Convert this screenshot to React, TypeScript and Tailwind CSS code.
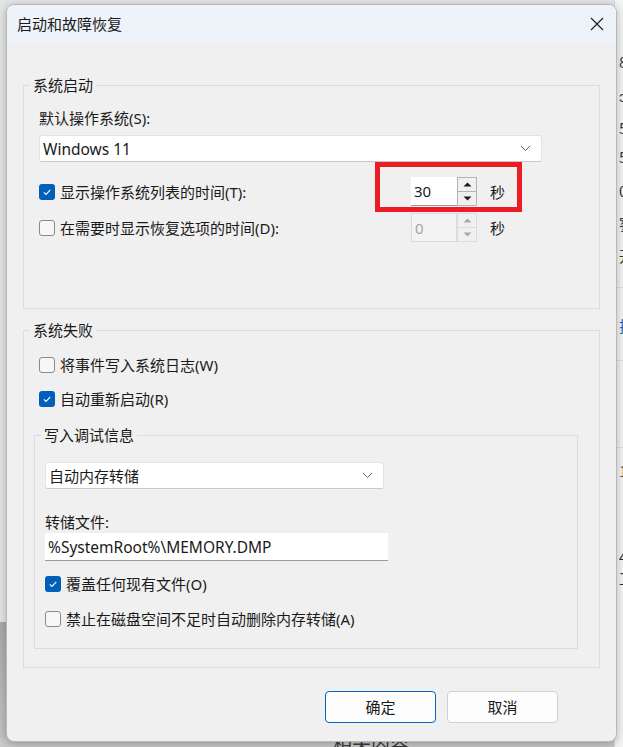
import { ReactNode } from 'react'

function Check({ checked }: { checked?: boolean }) {
  if (checked) {
    return (
      <span className="w-[16px] h-[16px] shrink-0 rounded-[3px] bg-[#005fb8] flex items-center justify-center">
        <svg width="10" height="10" viewBox="0 0 10 10">
          <path d="M1.8 5.3 L4 7.4 L8.3 2.9" stroke="#ffffff" strokeWidth="1.1" fill="none" />
        </svg>
      </span>
    )
  }
  return <span className="w-[16px] h-[16px] shrink-0 rounded-[3px] border border-[#8b8b8b] bg-[#f7f7f7]" />
}

function CheckRow({ checked, children, className = '' }: { checked?: boolean; children: ReactNode; className?: string }) {
  return (
    <div className={`flex items-center gap-[5px] h-[20px] ${className}`}>
      <Check checked={checked} />
      <span>{children}</span>
    </div>
  )
}

function Chevron() {
  return (
    <svg width="11" height="7" viewBox="0 0 11 7">
      <path d="M1 1 L5.5 5.5 L10 1" stroke="#5f5f5f" strokeWidth="1" fill="none" />
    </svg>
  )
}

function Spinner({ value, disabled }: { value: string; disabled?: boolean }) {
  const arrow = disabled ? '#a8a8a8' : '#1a1a1a'
  return (
    <div className="flex h-[29px]">
      <div
        className={`w-[46px] h-full flex items-center pl-[3px] border-b ${
          disabled ? 'bg-[#f3f3f3] border border-[#dcdcdc] text-[#a6a6a6]' : 'bg-white border-[#9a9a9a] text-[#1a1a1a]'
        }`}
      >
        {value}
      </div>
      <div className={`w-[20px] flex flex-col border ${disabled ? 'border-[#dcdcdc]' : 'border-[#b4b4b4]'}`}>
        <div className={`flex-1 flex items-center justify-center border-b ${disabled ? 'bg-[#f0f0f0] border-[#dcdcdc]' : 'bg-[#f0f0f0] border-[#b4b4b4]'}`}>
          <svg width="9" height="5" viewBox="0 0 9 5">
            <path d="M0.5 4.5 L4.5 0.5 L8.5 4.5 Z" fill={arrow} />
          </svg>
        </div>
        <div className="flex-1 flex items-center justify-center bg-[#f0f0f0]">
          <svg width="9" height="5" viewBox="0 0 9 5">
            <path d="M0.5 0.5 L4.5 4.5 L8.5 0.5 Z" fill={arrow} />
          </svg>
        </div>
      </div>
    </div>
  )
}

function Group({ title, children, className = '' }: { title: string; children: ReactNode; className?: string }) {
  return (
    <fieldset className={`border border-[#dcdcdc] ${className}`}>
      <legend className="ml-[6px] px-[3px] h-[20px] leading-[20px]">{title}</legend>
      {children}
    </fieldset>
  )
}

export default function App() {
  return (
    <div className="relative w-[623px] h-[747px] overflow-hidden bg-[#e4e4e4] text-[15px] leading-[20px] text-[#1a1a1a] font-[family-name:'Noto_Sans','Noto_Sans_CJK_SC',sans-serif]">
      {/* window behind the dialog */}
      <div className="absolute left-0 top-[622px] w-[10px] h-[125px] bg-gradient-to-b from-[#a9a9a9] to-[#c4c4c4]" />
      <div className="absolute left-0 top-[738px] w-[623px] h-[9px] bg-[#c9c9c9]" />
      <div className="absolute left-[333px] top-[731px] text-[19px] leading-[24px] text-[#3a3a3a] font-['Noto_Sans_CJK_SC',sans-serif]">相关内容</div>
      <div className="absolute left-[614px] top-0 w-[9px] h-[747px] bg-[#f3f3f3] border-l border-[#d6d6d6] text-[15px] text-[#333] font-['Noto_Sans_CJK_SC',sans-serif]">
        <div className="absolute left-[4px] top-[52px] leading-[20px]">8</div>
        <div className="absolute left-[4px] top-[86px] leading-[20px]">ↄ</div>
        <div className="absolute left-[4px] top-[118px] leading-[20px]">5</div>
        <div className="absolute left-[4px] top-[147px] leading-[20px]">5</div>
        <div className="absolute left-[4px] top-[181px] leading-[20px]">0</div>
        <div className="absolute left-[4px] top-[214px] leading-[20px]">寥</div>
        <div className="absolute left-[4px] top-[246px] leading-[20px]">开</div>
        <div className="absolute left-0 top-[287px] w-full border-t border-[#dedede]" />
        <div className="absolute left-[4px] top-[316px] leading-[20px] text-[#1f5fa8]">挂</div>
        <div className="absolute left-0 top-[360px] w-full border-t border-[#dedede]" />
        <div className="absolute left-0 top-[447px] w-full border-t border-[#dedede]" />
        <div className="absolute left-[4px] top-[461px] leading-[20px] text-[#555]">1</div>
        <div className="absolute left-[4px] top-[547px] leading-[20px]">4</div>
        <div className="absolute left-[4px] top-[568px] leading-[20px]">工</div>
      </div>

      {/* dialog */}
      <div className="absolute left-[6px] top-[4px] w-[611px] h-[738px] rounded-[8px] border border-[#b9b9b9] bg-[#f0f0f0] shadow-[0_2px_8px_rgba(0,0,0,0.25)] overflow-hidden flex flex-col">
        <div className="h-[38px] shrink-0 bg-[#eef3f9] flex items-center justify-between pl-[10px] pr-[12px]">
          <span className="text-[15px]">启动和故障恢复</span>
          <svg width="14" height="14" viewBox="0 0 14 14">
            <path d="M1 1 L13 13 M13 1 L1 13" stroke="#1a1a1a" strokeWidth="1.1" />
          </svg>
        </div>

        <div className="px-[16px] pt-[32px] flex flex-col">
          <Group title="系统启动" className="h-[234px]">
            <div className="mt-[13px] pl-[15px]">默认操作系统(S):</div>
            <div className="mt-[7px] ml-[15px] w-[503px] h-[27px] bg-white border border-[#e3e3e3] border-b-[#c9c9c9] rounded-[3px] flex items-center justify-between pl-[3px] pr-[10px] text-[15.5px]">
              <span>Windows 11</span>
              <Chevron />
            </div>
            <div className="mt-[15px] pl-[15px] flex items-center h-[29px]">
              <div className="w-[372px]">
                <CheckRow checked>显示操作系统列表的时间(T):</CheckRow>
              </div>
              <Spinner value="30" />
              <span className="ml-[13px]">秒</span>
            </div>
            <div className="mt-[7px] pl-[15px] flex items-center h-[29px]">
              <div className="w-[372px]">
                <CheckRow>在需要时显示恢复选项的时间(D):</CheckRow>
              </div>
              <Spinner value="0" disabled />
              <span className="ml-[13px]">秒</span>
            </div>
          </Group>

          <Group title="系统失败" className="mt-[11px] h-[348px]">
            <CheckRow className="mt-[15px] pl-[15px]">将事件写入系统日志(W)</CheckRow>
            <CheckRow checked className="mt-[14px] pl-[15px]">自动重新启动(R)</CheckRow>

            <Group title="写入调试信息" className="mt-[16px] ml-[10px] mr-[21px] h-[224px]">
              <div className="mt-[17px] ml-[10px] w-[339px] h-[27px] bg-white border border-[#e3e3e3] border-b-[#c9c9c9] rounded-[3px] flex items-center justify-between pl-[3px] pr-[10px]">
                <span>自动内存转储</span>
                <Chevron />
              </div>
              <div className="mt-[23px] pl-[10px]">转储文件:</div>
              <div className="mt-[1px] ml-[10px] w-[343px] h-[28px] bg-white border-b border-[#9a9a9a] flex items-center pl-[3px] text-[15.5px]">
                %SystemRoot%\MEMORY.DMP
              </div>
              <CheckRow checked className="mt-[13px] pl-[10px]">覆盖任何现有文件(O)</CheckRow>
              <CheckRow className="mt-[15px] pl-[10px]">禁止在磁盘空间不足时自动删除内存转储(A)</CheckRow>
            </Group>
          </Group>

          <div className="mt-[23px] flex justify-end gap-[11px] pr-[42px]">
            <button className="w-[111px] h-[32px] rounded-[4px] border border-[#0067c0] bg-[#fdfdfd]">确定</button>
            <button className="w-[111px] h-[32px] rounded-[4px] border border-[#d0d0d0] bg-[#fdfdfd]">取消</button>
          </div>
        </div>
      </div>

      {/* highlight */}
      <div className="absolute left-[375px] top-[162px] w-[147px] h-[50px] border-[5px] border-[#ec1c24]" />
    </div>
  )
}
